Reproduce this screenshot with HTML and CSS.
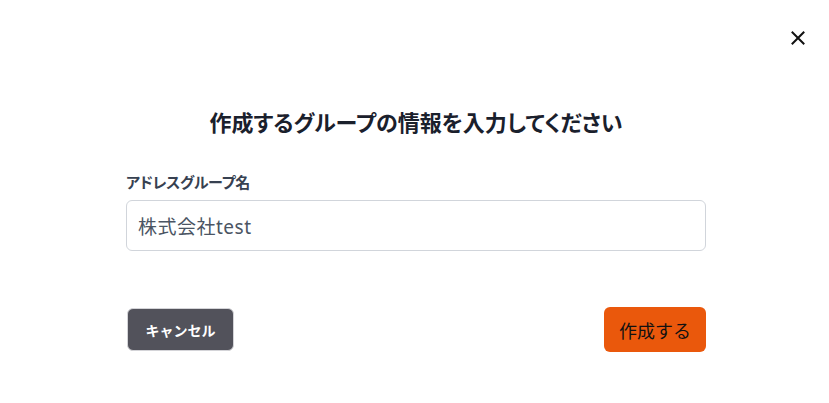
FILE: index.html
```html
<!DOCTYPE html>
<html lang="ja">
<head>
<meta charset="utf-8">
<link rel="stylesheet" href="styles.css">
</head>
<body>
<div class="modal">
  <button class="close" aria-label="閉じる">
    <svg width="14" height="14" viewBox="0 0 14 14"><path d="M1.5 1.5L12.5 12.5M12.5 1.5L1.5 12.5" stroke="#111" stroke-width="2" stroke-linecap="square"/></svg>
  </button>
  <div class="content">
    <h1 class="title">作成するグループの情報を入力してください</h1>
    <label class="label" for="name">アドレスグループ名</label>
    <input class="input" id="name" type="text" value="株式会社test">
    <div class="actions">
      <button class="btn btn-cancel">キャンセル</button>
      <button class="btn btn-create">作成する</button>
    </div>
  </div>
</div>
</body>
</html>
```
FILE: styles.css
```css
* { box-sizing: border-box; }
html, body { margin: 0; padding: 0; background: #fff; }
body {
  font-family: "Noto Sans CJK JP", "Noto Sans", sans-serif;
  width: 829px;
  height: 403px;
  overflow: hidden;
}
.modal {
  position: relative;
  width: 829px;
  height: 403px;
  background: #fff;
}
.close {
  position: absolute;
  top: 31px;
  right: 24px;
  border: 0;
  background: none;
  padding: 0;
  width: 14px;
  height: 14px;
  display: flex;
}
.content {
  width: 580px;
  margin-left: 126px;
  padding-top: 102px;
  display: flex;
  flex-direction: column;
}
.title {
  margin: 0;
  text-align: center;
  font-size: 22px;
  font-weight: 700;
  line-height: 38px;
  color: #1a202c;
  font-feature-settings: "palt";
}
.label {
  margin-top: 32px;
  font-size: 15px;
  font-weight: 700;
  line-height: 20px;
  color: #374151;
  font-feature-settings: "palt";
  letter-spacing: -0.3px;
}
.input {
  margin-top: 8px;
  height: 51px;
  border: 1px solid #d1d5db;
  border-radius: 6px;
  padding: 0 11px;
  font-family: "Noto Sans", "Noto Sans CJK JP", sans-serif;
  font-size: 19px;
  letter-spacing: 0.5px;
  color: #4b5563;
  outline: none;
}
.actions {
  margin-top: 56px;
  display: flex;
  justify-content: space-between;
  align-items: center;
}
.btn {
  border: 0;
  border-radius: 6px;
  font-family: "Noto Sans CJK JP", sans-serif;
  cursor: pointer;
}
.btn-cancel {
  margin-left: 1px;
  width: 107px;
  height: 43px;
  background: #52525b;
  color: #fff;
  font-size: 14px;
  font-weight: 700;
  border: 1px solid #d4d4d8;
}
.btn-create {
  width: 102px;
  height: 45px;
  background: #ea580c;
  color: #111;
  font-size: 18px;
  font-weight: 400;
}
```
